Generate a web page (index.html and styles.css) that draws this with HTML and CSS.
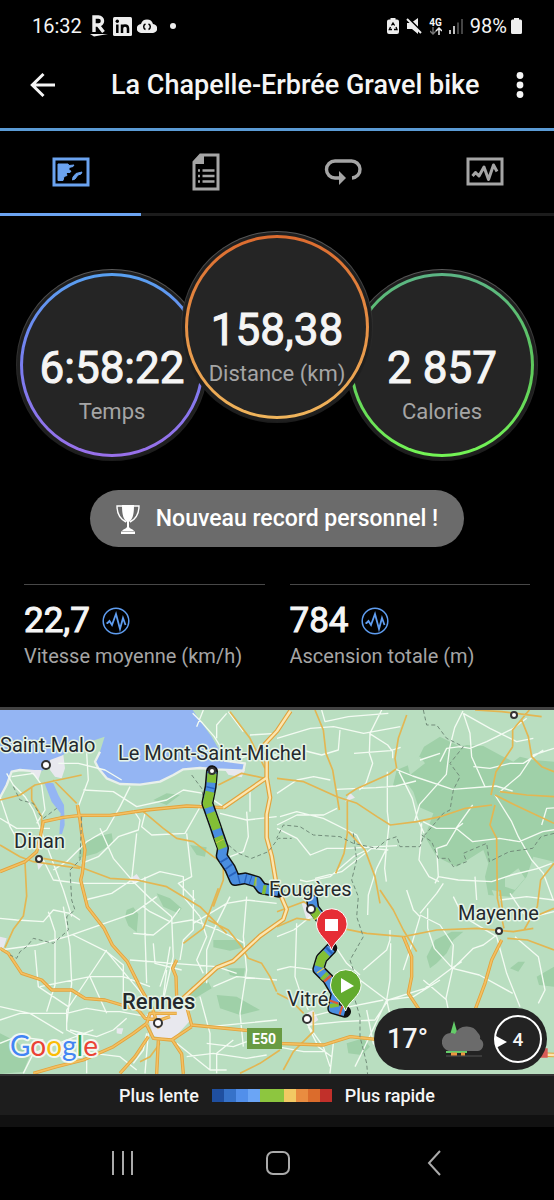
FILE: index.html
```html
<!DOCTYPE html>
<html lang="fr">
    <head>
        <meta charset="UTF-8" />
        <meta name="viewport" content="width=device-width, initial-scale=1.0" />
        <title>La Chapelle-Erbrée Gravel bike</title>
        <link rel="stylesheet" href="styles.css">
    </head>
    <body>
        <!-- BARRE D'ÉTAT -->
        <div class="status-bar">
            <div class="status-left">
                <span>16:32</span>
                <svg width="18" height="22" viewBox="0 0 18 22">
                    <path d="M4 17V2h4.500a4 4 0 0 1 0 8H4m4 0l5.500 7" fill="none" stroke="#eee" stroke-width="3.400"/>
                    <path d="M0 19h18L4 21.500z" fill="#eee"/>
                </svg>
                <svg width="19" height="19" viewBox="0 0 19 19">
                    <rect width="19" height="19" rx="1.500" fill="#eee"/>
                    <path d="M4.300 7.500V16M9 7.500V16M9 11.500c0-4 6-4 6 0V16" fill="none" stroke="#000" stroke-width="2.500"/>
                    <circle cx="4.300" cy="4.300" r="1.700"/>
                </svg>
                <svg width="20" height="14" viewBox="0 0 20 14">
                    <path d="M4.500 14a4.500 4.500 0 0 1-.5-9A6.300 6.300 0 0 1 16 5a4.500 4.500 0 0 1-.5 9z" fill="#eee"/>
                    <path d="M8.500 5a3 3 0 0 0 0 5.500M11.500 5a3 3 0 0 1 0 5.500" fill="none" stroke="#000" stroke-width="1.500"/>
                </svg>
                <span class="dot"></span>
            </div>
            <div class="status-right">
                <svg width="12" height="16" viewBox="0 0 12 16">
                    <path d="M3.500 0h5v1.500H10a2 2 0 0 1 2 2V14a2 2 0 0 1-2 2H2a2 2 0 0 1-2-2V3.500a2 2 0 0 1 2-2h1.500z" fill="#eee"/>
                    <path d="M4.500 7.500L6 5l1.600 2.500M9 9l1 2.500H7M5 11.500H2.300L3.500 9" fill="none" stroke="#000" stroke-width="1.300"/>
                </svg>
                <svg width="16" height="16" viewBox="0 0 16 16">
                    <path d="M1 5h4l7-5v16l-6-5H1z" fill="#eee"/>
                    <path d="M2 0l14 14" stroke="#000" stroke-width="2"/>
                    <path d="M1 1l14 14" stroke="#eee" stroke-width="2"/>
                </svg>
                <div class="network">
                    <span>4G</span>
                    <svg width="12" height="8" viewBox="0 0 12 8">
                        <path d="M3 0v7M0 4l3 3 3-3" fill="none" stroke="#777" stroke-width="1.300"/>
                        <path d="M9 8V1M6 4l3-3 3 3" fill="none" stroke="#eee" stroke-width="1.500"/>
                    </svg>
                </div>
                <svg width="14" height="16" viewBox="0 0 14 16">
                    <path d="M1 12v4M5 8v8" stroke="#eee" stroke-width="1.600"/>
                    <path d="M9 4.500V16M13 1v15" stroke="#555" stroke-width="1.600"/>
                </svg>
                <span class="battery">98%
                    <svg width="11" height="16" viewBox="0 0 11 16">
                        <path d="M3 0h5v1.500h1.500A1.500 1.500 0 0 1 11 3v11.500A1.500 1.500 0 0 1 9.500 16h-8A1.500 1.500 0 0 1 0 14.500V3a1.500 1.500 0 0 1 1.500-1.500H3z" fill="#eee"/>
                    </svg>
                </span>
            </div>
        </div>

        <!-- EN-TÊTE -->
        <header>
            <button class="back" aria-label="Retour">
                <svg width="26" height="26" viewBox="0 0 26 26">
                    <path d="M25 13H2M13.500 2L2.300 13l11.200 11" fill="none" stroke="#f5f5f5" stroke-width="3"/>
                </svg>
            </button>
            <h1>La Chapelle-Erbrée Gravel bike</h1>
            <button class="more" aria-label="Plus d'options">
                <svg width="8" height="26" viewBox="0 0 8 26" fill="#f5f5f5">
                    <circle cx="4" cy="3.500" r="3.400"/>
                    <circle cx="4" cy="13" r="3.400"/>
                    <circle cx="4" cy="22.500" r="3.400"/>
                </svg>
            </button>
        </header>

        <nav class="tabs">
            <button class="active" aria-label="Carte">
                <svg width="38" height="38" viewBox="0 0 38 38">
                    <rect x="2" y="6" width="34" height="26" fill="none" stroke="#6ba3f0" stroke-width="3"/>
                    <path d="M6 11h10l1 1.500 5-.5-1 1.500-4 1v3l2 .5-1 1.500-4 0 1 3-3 1-1 4H6z" fill="#6ba3f0" stroke="#6ba3f0" stroke-linejoin="round"/>
                    <path d="M20.500 27l.5-3 3-3.500 6-1.500-1 2-3 1-3 4z" fill="#6ba3f0" stroke="#6ba3f0" stroke-linejoin="round"/>
                </svg>
            </button>
            <button aria-label="Détails">
                <svg width="38" height="38" viewBox="0 0 38 38">
                    <path d="M13.500 2H31v34H7V9z" fill="none" stroke="#a5a5a5" stroke-width="3"/>
                    <path d="M6 9l8-8h3v10H6z" fill="#a5a5a5"/>
                    <path d="M15.500 17.500h12M15.500 23h12M15.500 28.500h12M11 17.500h2M11 23h2M11 28.500h2" stroke="#a5a5a5" stroke-width="2.400"/>
                </svg>
            </button>
            <button aria-label="Circuits">
                <svg width="38" height="38" viewBox="0 0 38 38">
                    <path d="M16 25h-5a8.500 8.500 0 0 1 0-17h16a8.500 8.500 0 0 1 1 17" fill="none" stroke="#a5a5a5" stroke-width="3.400"/>
                    <path d="M15 18l7 7-7 7z" fill="#a5a5a5"/>
                </svg>
            </button>
            <button aria-label="Graphiques">
                <svg width="38" height="38" viewBox="0 0 38 38">
                    <rect x="2" y="6" width="34" height="25" fill="none" stroke="#a5a5a5" stroke-width="3"/>
                    <path d="M6.500 23l3-3.500 3.500 3.500 5-9 4.500 12.500 5-14.500 3.500 6.500" fill="none" stroke="#a5a5a5" stroke-width="3" stroke-linejoin="round"/>
                </svg>
            </button>
        </nav>

        <!-- RÉSUMÉ DE L'ACTIVITÉ -->
        <main>
            <section class="circles">
                <div class="circle time">
                    <div class="ring">
                        <div class="disc">
                            <strong>6:58:22</strong>
                            <span>Temps</span>
                        </div>
                    </div>
                </div>
                <div class="circle distance">
                    <div class="ring">
                        <div class="disc">
                            <strong>158,38</strong>
                            <span>Distance (km)</span>
                        </div>
                    </div>
                </div>
                <div class="circle calories">
                    <div class="ring">
                        <div class="disc">
                            <strong>2 857</strong>
                            <span>Calories</span>
                        </div>
                    </div>
                </div>
            </section>

            <button class="record">
                <svg width="24" height="30" viewBox="0 0 24 30">
                    <path d="M6 1h12c0 9-1 14-5 17v5c1 2 4 2 5 4H6c1-2 4-2 5-4v-5C7 15 6 10 6 1zM5 27.500h14V30H5z" fill="#fff"/>
                    <path d="M6 2H1c0 8 3 13 9 16M18 2h5c0 8-3 13-9 16" fill="none" stroke="#fff" stroke-width="1.400"/>
                </svg>
                Nouveau record personnel !
            </button>

            <section class="stats">
                <div class="stat">
                    <div class="value">22,7
                        <svg width="28" height="28" viewBox="0 0 28 28" fill="none" stroke="#5f9df0">
                            <circle cx="14" cy="14" r="12.800" stroke-width="1.500"/>
                            <path d="M4.500 16h1l2-2 2.500 4 4-11 4 15 3-11 2.500 7" stroke-width="1.800"/>
                        </svg>
                    </div>
                    <span>Vitesse moyenne (km/h)</span>
                </div>
                <div class="stat">
                    <div class="value">784
                        <svg width="28" height="28" viewBox="0 0 28 28" fill="none" stroke="#5f9df0">
                            <circle cx="14" cy="14" r="12.800" stroke-width="1.500"/>
                            <path d="M4.500 16h1l2-2 2.500 4 4-11 4 15 3-11 2.500 7" stroke-width="1.800"/>
                        </svg>
                    </div>
                    <span>Ascension totale (m)</span>
                </div>
            </section>

            <!-- CARTE DU PARCOURS -->
            <section class="map">
                <svg class="map-canvas" viewBox="0 0 554 364">
                    <rect width="554" height="364" fill="#b9dec0"/>
                    <g transform="scale(0.33333)">
                        <!-- mer, forêts et villes -->
                        <path class="water" d="M0 0H578L602 35 635 80 658 120 672 152 735 160 730 182 650 178 600 174 550 178 520 195 480 215 420 224 360 222 320 205 295 175 285 155 300 125 314 80 285 90 240 105 200 125 150 170 120 185 60 180 35 185 20 225 0 262zM132 215L160 220 175 255 192 285 194 345 186 372 178 372 182 310 155 275z"/>
                        <path class="beach" d="M672 152L735 160 730 182 650 178 600 174 550 178 520 195 480 215 420 224 360 222 320 205 295 175 285 155 300 125M120 185L60 180 35 185 20 225 0 262"/>
                        <path class="wood" d="M1178 230L1190 180 1250 155 1272 110 1320 80 1380 110 1400 105 1450 108 1500 135 1540 155 1560 140 1600 150 1662 155V455L1600 440 1580 500 1530 560 1465 555 1455 500 1465 460 1450 420 1370 470 1310 440 1275 380 1300 310 1255 290 1240 245 1225 225zM270 385L335 370 340 400 290 430 235 445 240 410zM460 270L500 250 540 255 500 285zM570 405L620 412 615 440 590 435zM380 600l20-8 15 20-5 55-25-20-10-25zM470 550l40 15 35 30-10 15-45-20zM640 690l70 0 30 20-50 12-50-10zM650 855l60 5 70 40-60 15-60-20zM680 775l55 0-5 30-40-10zM575 830l50-15 10 20-50 30-20 20zM1280 740l25-50 50-25 35 0-30 25-20 40-30 30-20 15zM1530 775l25-20 20 0-20 30zM0 970l50 25 40 40-20 50-70 7zM1610 800l52-30v60l-45-5zM1040 1000l50-15 20 25-25 25-40-5z"/>
                        <path class="bay" d="M1220 150l40-10 15 20-45 35zM1515 505l40-30 20 30-30 35-30-10zM1475 540l25 5-10 30z"/>
                        <path class="town" d="M150 150l40-15 5 40-10 30-20-5-15-20zM440 912l65-15 60-10 5 45-55 60-55-15zM85 180l40 0-10 30zM110 450l25 5-20 25zM675 180l60 0-10 22-40-8zM1035 275l30-12-15-15zM350 955l20 0-5 18-15-3zM0 680l20 5-10 30-10 10zM905 580l40 0 0 40-25 10zM385 510l25-18 10 15-15 15zM920 910l20-10 15 30-30 20z"/>

                        <!-- routes secondaires -->
                        <g class="road">
                            <path d="M20 190L40 225 75 260 100 300 130 380 190 540 215 620M0 260L30 350 70 420M35 200L100 190 125 225 135 300 110 340M175 160l60 0 80 20 50 30M260 130l5 80-30 80M250 240l90 5 70 45 90-20 50-30 60 10 60 40M390 230l-30 60-40 70-60 35-60 60-40 25M400 300l20 30-5 30-60 20-60 60-50 20M435 310l-10 40 30 25 100-5 40-70 15-30M300 355l40 90 60 70 50 50 65 55 5 120-30 130M410 370l-15 140-60 40-80 20M130 450l30 60 80 10 160 0 80-35 70 15 0 60 50 60M560 370l15 130-40 20 50 50M660 310l80 20 90-10M740 305l5 75-15 45-40 15M750 230l0 75M0 325l50 30 100 0"/>
                            <path d="M578 10l30 30 35 40 15 25M610 0l-20 50M680 10l-30 35 0 40M685 5l45 60M750 75l80-5M690 155l60-20 80 0M831 85l100-30 70-5 90 20 110-20M965 0l10 35 70-15 120-10M1145 0l-35 70-2 60 10 30-20 60-20 20M1108 70l55 35 15 20 0 20M1062 130l110-8 30-10M1020 60l-5 60-50 15-60-15M831 250l60-40 50-10 50 10M1008 238l120-5 60-5 60-15M1188 178l50 20 120 40 130-10 50 15M1197 185l40 80 15 60 20 45M1162 185l0 120 5 40-8 70-5 60 5 40M1390 10l20 60 5 70 40 90M1389 3l-25 50-15 60-10 80-80 90-15 50M1390 10l80 45 80 40 50-10M1320 155l20-40 40-5 30 5 50-20 80-40 40-30M1260 150l60-20M1420 170l50 5 60-15 40 0 60-40M1485 255l50 80 20 45 40 70 35 40 30 80M1500 245l60-50 40-60 62-20M1418 285l-50 70 50 40 80-10 60 10 70-30 60-10M1269 335l40 20 60 0 20-15M1370 355l-30 50-30 10 5 85-10 20M1625 345l15-50 30-2M1315 500l60 10 100 5 60-20 80-20 40-15M1265 340l-3 60-5 50 30 50 30 15M945 505l80-20 90-70 50 5M831 355l60 30 40 50 50-20 60 0 150-8M831 345l60-30 80 0 40-20M840 320l50-15 80 20 100 50 20 40M900 510l20 5 70-15 70-60 40-20M1160 415l-30 60-25 80-2 60"/>
                            <path d="M0 625l50 5 80 5 30-35 50 10 30 20M0 720l110-15 90-25 200-70 70-50M145 605l20 60 0 160-25 80M190 590l20 120 5 110-15 120M105 720l10 110 90 60M220 675l100 50 50 60 50 60 20 30M320 720l-60 90-60 90 0 60 40 20M120 830l150-30 100 0 80 30M270 800l50 110M320 725l50 40 0 120M435 500l0 170 5 150M400 670l60 5 50-40 30-40M510 635l-60-30-20-15M515 640l60-10 80 30 80 40M390 750l130 10 130 10 60 20M580 540l0 120-30 30-10 60M580 640l100-60 60-10 90 10M690 560l-40 80-30 80 0 100M740 560l-10 120 10 100-20 130 10 100M480 830l20-60 10-60M490 860l10-80M640 830l70-30 121 10M600 860l30 110 0 110M630 950l201-20M620 1000l80 10 40-15M0 930l60-20 140 0 60-15 60 10 40 0 80 15M0 890l90 20 100 60M70 1090l30-60 100-40 80-30M210 960l80 20 50-20 40-35M180 1040l100-10 80 10 50 40M260 1000l0 90M400 1060l30-40 10-50M445 970l-10 120M0 1000l50-20 80 10M650 1090l0-60 50-40M530 1000l100 80 50 0M560 1040l80-10 100 15 60-10M460 700l5 60 80 20M600 620l20 60-30 70 20 40"/>
                            <path d="M890 640l-5 160 20 60 20 40M831 780l40-10 110 15M831 680l50-20 50-40M930 920l120-30 100-20M925 945l100-10 100-5 40-60M925 950l30 60 40 30M920 940l50 70 20 60M1000 700l40 60 40 35M1090 780l70-60 10-30 0-30M1080 810l80 60 80-10 80-50M1160 870l20 90M1172 700l-2 110-10 60-80 170-15 30M1165 870l110-35 40-30 40-30 30-20M1358 775l-55-60-20-60 0-60M1220 540l20 60 20 20-30 100-20 60M1260 610l50-60 20-30M1260 615l60 30 40 60-5 70M1358 775l80 20 100 55M1270 810l70 60M1358 775l-20 90 20 100M1360 775l60-60 30-10 40-30M1490 680l30 110 40 100M1490 680l-100-60-30-60M1545 680l70 60 20 100-20 40M1500 570l80-10 82 10M1425 500l5 70M1530 550l40 60 50 5 42-10M1000 1000l-10 90M831 1010l80 15 60 0M1100 900l20 100 60 70"/>
                        </g>

                        <!-- routes principales -->
                        <g class="main">
                            <path d="M0 270l60-15 45-30 140-30M160 210l30 30 40 40M95 230l0 40 30 50 0 45M0 405l60 35 40 15 140 20M75 458l5 100-10 60-30 40-25 55M130 445l80 15 120 45 80 5 90 20 100 60 80 80M430 305l60 50 40 30 50 10 60 45 30 20 0 50-30 80M655 225l70-35 70 15M690 5l60 80 45 90M550 700l60-45 15-40 30-80M625 630l60 30 40 50 20 35 40 15 25 40 20 45M945 0l25 60 8 70 20 50 20 120M831 205l80 10 100 45 60 20 60 40 40 25 80-10 70-15 75-25 80-10M1188 177l-20 15-100 45-30 20M1190 175l-5-30 10-60 25-70M1042 270l0 100-10 60-25 60M1045 365l50 55 30 80 15 80M1538 110l0-50 50-60M1425 0l80 5 120 15M1565 30l20 50 10 60 30 30 37 15M1538 110l-50 75-15 70M1485 285l-15 60 20 40 2 180 20 90M1500 245l80 10 82 5M1485 255l60 30 117 55M1662 460l-40 50-10 80-40 70M1140 540l40 60 30 60 40 65M831 605l80-30 30 20M831 650l60-25 40 5M831 850l40 20 40 40M940 905l0 60-60 60-30 55M1000 650l100 20 110 10 100-20 120-5 110 10 60-10M1662 720l-80-30-60-5M480 1000l-30 40-30 15M720 1090l60-30 60-40M1500 540l10 80M1662 595l-70 30"/>
                        </g>

                        <!-- voies rapides -->
                        <g class="highway">
                            <path id="highways" d="M0 485L75 455 110 425 122 375 130 335 190 322 240 316 330 316 440 300 560 288 670 293M232 285l8 45 5 40 10 50-8 70-5 20 20 80 50 65 25 50 45 50 40 80 35 60 20 60M0 715l25 15 40 60 60 20 30 30 60 0 40 25 60 5 100 30 20 25 45 5 30-10M100 1090l70-20 80-20 90-40 60-40 40-30M360 1090l45-50 40-60M470 1092l5-100M550 1092l-5-60-30-45M530 860l-2-60-10-25 12-25M560 890l15 55 250 25M440 945l20 40 55 5 60-40M440 940l10-30 80 0M831 1000l140 5 80-25 140 15 100 20M1210 680l25 60 0 60-10 50 40 60M1505 690l-30 60-20 70-30 80"/>
                        </g>
                        <use href="#highways" class="highway-core"/>
                        <g class="motorway">
                            <path id="motorways" d="M670 293l130-90 0-60-25-20 56-60 40-60M800 203l10 60-10 50 0 70 15 55 15 90 30 70-10 30-70 50-80 75-50 20-60 55-50 45-10 20M1290 1020l372 15"/>
                        </g>
                        <use href="#motorways" class="motorway-core"/>

                        <g class="border">
                            <path d="M40 230l20 40 40 10 20 35 10 10 40-30M245 320l-5 130-30 30 5 90 10 30-25 20 5 40-45 40-60-15-20 25-20 15-10 20-20-10M575 195l30 40 10 60 20 60M685 405l30 25 40 15 50-20 30-40 40 0M1270 0l10 45 30 0 30 40 50 25-40 50 30 40-20 40-10 60-20 10-60 70-10 30-60 0-10-30-30 10-30 25-70-15-40-20-80-5-40-25-50-5-20 40M1265 375l30 20 20 50 30 0 15 25 40-15-10-25 70-30 8 55 60-30 70-10 25-35 40-10M1060 370l10 80-15 60 20 50-5 60 20 60-40 70 20 60-20 10 30 100 0 60 20 80 5 60"/>
                        </g>
                        <path class="toll" d="M1625 1015h18v28h-25z"/>

                        <!-- tracé GPS -->
                        <path class="track-outline" d="M636 184L632 230 622 280 645 345 655 375 669 415 665 438 690 475 705 510 735 505 770 515 785 535 835 545M935 560l5 35 35 45M994 715L965 745 955 778 985 808 1010 850 1000 895 1035 905"/>
                        <path class="track" stroke="#4a8ee0" d="M636 184L632 230 622 280 645 345 655 375 669 415 665 438 690 475 705 510 735 505 770 515 785 535 835 545M935 560l5 35 35 45M994 715L965 745 955 778 985 808 1010 850 1000 895 1035 905"/>
                        <path class="track" stroke="#82bf35" d="M636 190l-2 28M630 245l-8 35 4 12M632 308l18 50M655 380l13 35M763 514l5 1M788 538l10 2M940 598l15 25M980 730l-15 15-8 25M970 795l8 8M1002 880l2 12"/>
                        <path class="track" stroke="#2863bd" d="M632 231l-1 4M670 448l3 5M685 468l3 4M696 490l3 5M715 509l4-1M735 505l4 1M750 510l3 1M815 542l10 1M990 719l-5 5"/>
                        <path class="track" stroke="#df5c36" d="M980 803l5 6M1003 873l-2 6M1020 900l6 2"/>
                        <path class="track" stroke="#e7c947" d="M659 392l1 2M767 515l2 0M953 620l2 3M961 780l2 3"/>
                    </g>

                    <g class="place">
                        <circle cx="46" cy="55" r="4"/>
                        <circle cx="39" cy="149" r="3"/>
                        <circle cx="212" cy="61" r="3"/>
                        <circle cx="158" cy="313" r="4"/>
                        <circle cx="311" cy="199" r="4"/>
                        <circle cx="307" cy="309" r="4"/>
                        <circle cx="499" cy="221" r="3"/>
                        <circle cx="514" cy="5" r="3"/>
                    </g>
                    <g class="label">
                        <text x="0" y="42">Saint-Malo</text>
                        <text x="118" y="50">Le Mont-Saint-Michel</text>
                        <text x="14" y="138">Dinan</text>
                        <text x="269" y="186">Fougères</text>
                        <text x="458" y="210">Mayenne</text>
                        <text x="287" y="296">Vitré</text>
                        <text x="122" y="299" class="city">Rennes</text>
                    </g>
                    <rect x="247" y="318" width="35" height="21" fill="#689b43"/>
                    <text x="264" y="334" class="shield">E50</text>
                    <text x="10" y="346" class="google"><tspan fill="#4285f4">G</tspan><tspan fill="#ea4335">o</tspan><tspan fill="#fbbc05">o</tspan><tspan fill="#4285f4">g</tspan><tspan fill="#34a853">l</tspan><tspan fill="#ea4335">e</tspan></text>

                    <!-- arrivée et départ -->
                    <path class="pin" fill="#e62e35" d="M331.500 240c-3-10-15-15-15-26a15.300 15.300 0 0 1 30.600 0c0 11-12.600 16-15.600 26z"/>
                    <rect x="325" y="209" width="13" height="12" fill="#fff"/>
                    <path class="pin" fill="#62ab2e" d="M345.500 301c-3-10-15-15-15-26a15.300 15.300 0 0 1 30.600 0c0 11-12.600 16-15.600 26z"/>
                    <path d="M341 268v15l13-7z" fill="#fff"/>
                </svg>

                <div class="weather">
                    <span class="temp">17°</span>
                    <svg width="44" height="38" viewBox="0 0 44 38">
                        <path d="M12 1l4 14H8z" fill="#64cd69"/>
                        <path d="M9 31a9 9 0 1 1 4-17 13 13 0 0 1 23-1c3 3 2 5 2 6a6.500 6.500 0 0 1-2 12z" fill="#6b6b6b"/>
                        <path d="M4 36h36" stroke="#555"/>
                        <path d="M4 32h21" stroke="#64cd69" stroke-width="2"/>
                        <path d="M9 34h6M19 34h4" stroke="#eb9440" stroke-width="3"/>
                    </svg>
                    <span class="wind">4</span>
                </div>
            </section>

            <div class="legend">
                <span>Plus lente</span>
                <div class="scale">
                    <i class="s1"></i><i class="s2"></i><i class="s3"></i><i class="s4"></i><i class="s5"></i><i class="s5"></i><i class="s6"></i><i class="s7"></i><i class="s8"></i><i class="s9"></i>
                </div>
                <span>Plus rapide</span>
            </div>
        </main>

        <!-- NAVIGATION DU TÉLÉPHONE -->
        <footer>
            <button aria-label="Applications récentes">
                <svg width="24" height="26" viewBox="0 0 24 26">
                    <path d="M2 1v24M12 1v24M21 1v24" stroke="#aaa" stroke-width="2"/>
                </svg>
            </button>
            <button aria-label="Accueil">
                <svg width="26" height="26" viewBox="0 0 26 26">
                    <rect x="2" y="2" width="22" height="22" rx="6" fill="none" stroke="#aaa" stroke-width="2"/>
                </svg>
            </button>
            <button aria-label="Précédent">
                <svg width="14" height="26" viewBox="0 0 14 26">
                    <path d="M13 1L2 13l11 12" fill="none" stroke="#aaa" stroke-width="2"/>
                </svg>
            </button>
        </footer>
    </body>
</html>
```

FILE: styles.css
```css
* {
    box-sizing: border-box;
    margin: 0;
    padding: 0;
}

body {
    font-family: Roboto, "Liberation Sans", sans-serif;
    color: #f5f5f5;
    background: #000;
}

svg {
    display: block;
    flex-shrink: 0;
}

button {
    font-family: inherit;
    color: inherit;
    background: none;
    border: none;
    cursor: pointer;
}

/* BARRE D'ÉTAT */
.status-bar {
    display: flex;
    justify-content: space-between;
    align-items: center;
    height: 52px;
    padding: 0 32px;
    font-size: 20px;
}

.status-left {
    display: flex;
    align-items: center;
    gap: 5px;
}

.status-left span:first-child {
    margin-right: 3px;
}

.dot {
    width: 6px;
    height: 6px;
    margin-left: 8px;
    background: #eee;
    border-radius: 50%;
}

.status-right {
    display: flex;
    align-items: center;
    gap: 7px;
}

.network {
    display: flex;
    flex-direction: column;
    align-items: center;
    font-size: 10px;
    font-weight: bold;
    line-height: 9px;
}

.battery {
    display: flex;
    align-items: center;
    gap: 4px;
}

/* EN-TÊTE */
header {
    display: flex;
    align-items: center;
    justify-content: space-between;
    height: 79px;
    padding: 0 30px 10px;
    border-bottom: 3px solid #5b9bd5;
}

h1 {
    flex: 1;
    padding-left: 55px;
    font-size: 27px;
    font-weight: 500;
    white-space: nowrap;
}

.tabs {
    display: grid;
    grid-template-columns: 141fr 130fr 144fr 139fr;
    height: 85px;
}

.tabs button {
    display: flex;
    justify-content: center;
    align-items: center;
    border-bottom: 3px solid #1c1c1c;
}

.tabs .active {
    border-color: #6ba3f0;
}

/* CERCLES */
.circles {
    display: flex;
    justify-content: center;
    padding: 15px 0 29px;
}

.circle {
    width: 192px;
    height: 192px;
    margin-top: 38px;
    padding: 1px;
    background: linear-gradient(#5a5a5a, #2b2b2b 50%, #1c1c1c);
    border-radius: 50%;
}

.circle + .circle {
    margin-left: -27px;
}

.ring {
    height: 100%;
    padding: 3px;
    background: #1f1f1f;
    border-radius: 50%;
}

.disc {
    display: flex;
    flex-direction: column;
    align-items: center;
    height: 100%;
    padding-top: 67px;
    border: 3px solid transparent;
    border-radius: 50%;
}

.time .disc {
    background: linear-gradient(#252525, #252525) padding-box, linear-gradient(#58a0f0, #7a7df0 50%, #9970ea) border-box;
}

.distance {
    position: relative;
    margin-top: 0;
}

.distance .disc {
    background: linear-gradient(#252525, #252525) padding-box, linear-gradient(#dc6b2f, #f0b55c) border-box;
}

.calories .disc {
    background: linear-gradient(#252525, #252525) padding-box, linear-gradient(#5cb585, #5ec95c 50%, #74f555) border-box;
}

.disc strong {
    font-size: 44px;
    font-weight: 400;
    line-height: 50px;
    white-space: nowrap;
    -webkit-text-stroke: 1px;
}

.disc span {
    font-size: 22px;
    line-height: 38px;
    color: #a5a5a5;
    white-space: nowrap;
}

.record {
    display: flex;
    align-items: center;
    gap: 16px;
    width: max-content;
    height: 57px;
    margin: 0 auto;
    padding: 0 26px;
    font-size: 23px;
    font-weight: 500;
    color: #fff;
    background: #6b6b6b;
    border-radius: 29px;
}

/* STATISTIQUES */
.stats {
    display: grid;
    grid-template-columns: 1fr 1fr;
    gap: 25px;
    padding: 37px 24px 36px;
}

.stat {
    padding-top: 16px;
    border-top: 1px solid #484848;
}

.value {
    display: flex;
    align-items: center;
    gap: 12px;
    font-size: 35px;
    font-weight: 400;
    line-height: 40px;
    -webkit-text-stroke: 1px;
}

.stat span {
    display: block;
    font-size: 20px;
    line-height: 30px;
    color: #a5a5a5;
}

/* CARTE */
.map {
    position: relative;
    border-top: 3px solid #424242;
}

.map-canvas {
    width: 100%;
    height: auto;
}

.water {
    fill: #94b5f3;
}

.beach {
    fill: none;
    stroke: #e9f0ea;
    stroke-width: 7;
    stroke-linejoin: round;
}

.wood {
    fill: #9fd0a8;
}

.bay {
    fill: #b9dec0;
}

.town {
    fill: #e8e8ee;
}

.toll {
    fill: #d75c58;
}

.road,
.main,
.highway,
.highway-core,
.motorway,
.motorway-core,
.border {
    fill: none;
    stroke-linejoin: round;
}

.road {
    stroke: #f3fbf2;
    stroke-width: 4;
}

.main {
    stroke: #e3b652;
    stroke-width: 5;
}

.highway {
    stroke: #e2a33c;
    stroke-width: 10;
}

.highway-core {
    stroke: #f3c062;
    stroke-width: 5;
}

.motorway {
    stroke: #e2a33c;
    stroke-width: 14;
}

.motorway-core {
    stroke: #fbe6b0;
    stroke-width: 7;
}

.border {
    stroke: #718c79;
    stroke-width: 3;
    stroke-dasharray: 12 8;
}

.track-outline {
    fill: none;
    stroke: #111;
    stroke-width: 36;
    stroke-linecap: round;
    stroke-linejoin: round;
}

.track {
    fill: none;
    stroke-width: 27;
    stroke-linejoin: round;
}

.place circle {
    fill: #fff;
    stroke: #333;
    stroke-width: 2;
}

.label text {
    font-size: 20px;
    fill: #24292d;
    stroke: #e6f4e8;
    stroke-width: 3px;
    stroke-linejoin: round;
    paint-order: stroke;
}

.label .city {
    font-size: 22px;
    font-weight: 500;
}

.shield {
    font-size: 14px;
    font-weight: bold;
    text-anchor: middle;
    fill: #fff;
}

.google {
    font-family: Lato, sans-serif;
    font-size: 28px;
    stroke: #f2f8f2;
    stroke-width: 4px;
    stroke-linejoin: round;
    paint-order: stroke;
}

.pin {
    stroke: #fff;
    stroke-width: 1;
}

/* MÉTÉO */
.weather {
    position: absolute;
    right: 7px;
    bottom: 4px;
    display: flex;
    align-items: center;
    height: 62px;
    padding: 0 5px 0 13px;
    background: #232323;
    border-radius: 31px;
}

.temp {
    margin-right: 14px;
    font-size: 27px;
    font-weight: 500;
}

.wind {
    position: relative;
    width: 48px;
    height: 48px;
    margin-left: 8px;
    font-size: 19px;
    font-weight: 500;
    line-height: 46px;
    text-align: center;
    border: 2px solid #fff;
    border-radius: 50%;
}

.wind::before {
    content: "";
    position: absolute;
    top: 19px;
    left: 0;
    border-top: 6px solid transparent;
    border-bottom: 6px solid transparent;
    border-left: 11px solid #fff;
}

/* LÉGENDE */
.legend {
    display: flex;
    justify-content: center;
    align-items: center;
    gap: 13px;
    height: 53px;
    font-size: 18px;
    font-weight: 500;
    background: #1d1d1d;
    border-top: 2px solid #333;
    border-bottom: 12px solid #111;
}

.scale {
    display: flex;
}

.scale i {
    width: 12px;
    height: 13px;
}

.s1 { background: #1f4fa0; }
.s2 { background: #3672c9; }
.s3 { background: #528fea; }
.s4 { background: #6ba5f5; }
.s5 { background: #8dc63f; }
.s6 { background: #f2c963; }
.s7 { background: #e98c40; }
.s8 { background: #db6c2c; }
.s9 { background: #c1302a; }

/* BOUTONS DU BAS */
footer {
    display: grid;
    grid-template-columns: 200fr 156fr 198fr;
    height: 72px;
}

footer button {
    display: flex;
    justify-content: center;
    align-items: center;
}

footer button:first-child {
    padding-left: 46px;
}

footer button:last-child {
    padding-right: 42px;
}
```
